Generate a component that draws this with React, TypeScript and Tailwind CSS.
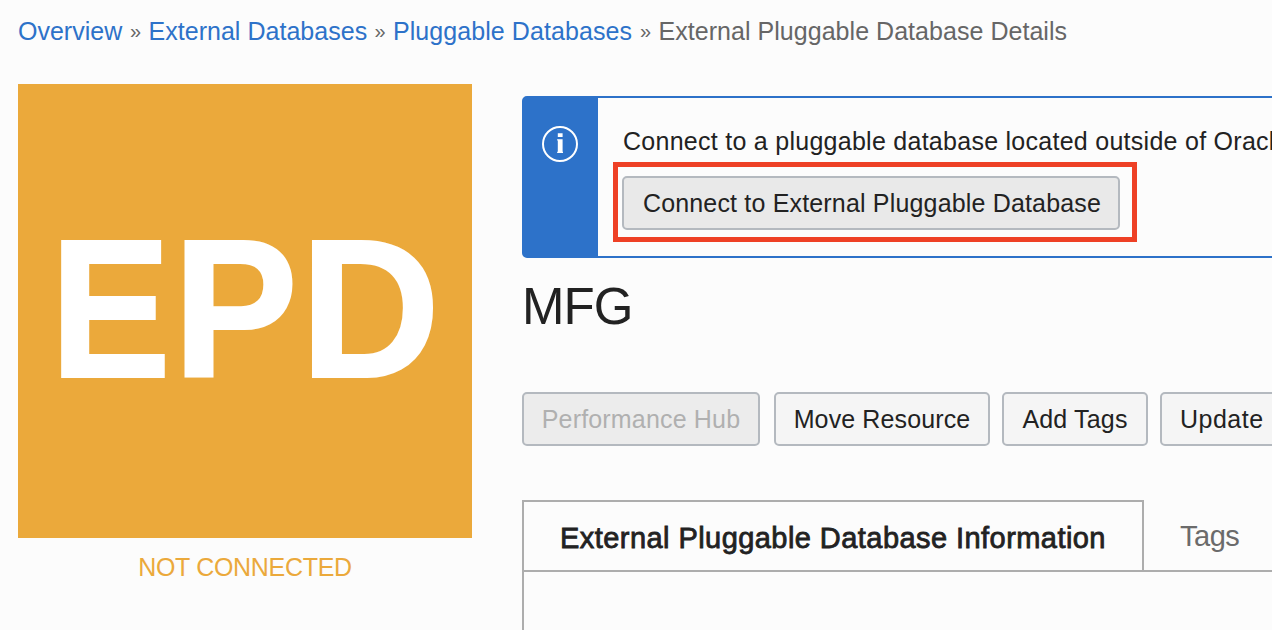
import { Fragment } from "react";
import type { ReactNode } from "react";

const crumbs = [
  { label: "Overview", width: "w-[112px]" },
  { label: "External Databases", width: "w-[226px] tracking-[0.03px]" },
  { label: "Pluggable Databases", width: "w-[247px] tracking-[0.07px]" },
];

function Button({ children, className = "" }: { children: ReactNode; className?: string }) {
  return (
    <button
      className={`h-[54px] shrink-0 whitespace-nowrap rounded-[5px] border-2 border-[#b4b9bf] pt-[2px] text-[25px] ${className}`}
    >
      {children}
    </button>
  );
}

function InfoIcon() {
  return (
    <svg width="36" height="36" viewBox="0 0 36 36" fill="none">
      <circle cx="18" cy="18" r="17" stroke="white" strokeWidth="2" />
      <path d="M15.8 7.2h4.8v3.8h-4.8zM15.8 13.2h4.8V27h-4.8z" fill="white" />
      <path d="M15.2 13.2h1v1.2h-1zM15.2 25.8h5.8V27h-5.8z" fill="white" />
    </svg>
  );
}

export default function App() {
  return (
    <div className="flex h-[630px] w-[1272px] flex-col overflow-hidden bg-[#fcfcfc] font-['Liberation_Sans',Arial,sans-serif] text-[#222]">
      <nav className="flex h-[84px] shrink-0 items-start whitespace-nowrap pl-[18px] pt-[13px] text-[25px] leading-[36px] text-[#666]">
        {crumbs.map((c) => (
          <Fragment key={c.label}>
            <a className={`shrink-0 text-[#2d72c9] ${c.width}`}>{c.label}</a>
            <span className="w-[18.5px] shrink-0 text-[20px]">»</span>
          </Fragment>
        ))}
        <span className="tracking-[0.04px]">External Pluggable Database Details</span>
      </nav>

      <div className="flex min-h-0 flex-1 pl-[18px]">
        <aside className="flex w-[454px] shrink-0 flex-col">
          <div className="flex h-[454px] shrink-0 justify-start bg-[#eba93b] pl-[32px] pt-[125px] text-[197px] font-bold leading-[200px] text-white [-webkit-text-stroke:2px_white]">
            <span className="w-[123px] origin-left scale-x-[0.92]">E</span>
            <span className="w-[127px] origin-left scale-x-[0.95]">P</span>
            <span className="origin-left scale-x-[0.985]">D</span>
          </div>
          <div className="pt-[11px] text-center text-[25px] leading-[36px] tracking-[-0.3px] text-[#eba93b]">NOT CONNECTED</div>
        </aside>

        <main className="flex w-[800px] shrink-0 flex-col pl-[50px] pt-[12px]">
          <section className="flex h-[162px] w-[800px] shrink-0 rounded-[5px] border-2 border-[#2d72c9]">
            <div className="flex w-[74px] shrink-0 bg-[#2d72c9] pl-[18px] pt-[28px]">
              <InfoIcon />
            </div>
            <div className="flex flex-col items-start whitespace-nowrap pl-[15px] pt-[25px]">
              <p className="h-[39px] pl-[10px] text-[25px] leading-[36px] tracking-[0.27px]">
                Connect to a pluggable database located outside of Oracle
              </p>
              <div className="h-[80px] w-[524px] shrink-0 border-[5px] border-[#ee4025] pl-[4px] pt-[9px]">
                <Button className="w-[498px] bg-[#e9e9e9] pl-[2px] tracking-[0.17px]">Connect to External Pluggable Database</Button>
              </div>
            </div>
          </section>

          <h1 className="h-[134px] shrink-0 pt-[19px] text-[51px] leading-[60px] tracking-[-1px]">MFG</h1>

          <div className="flex h-[108px] shrink-0">
            <Button className="mr-[14px] w-[238px] bg-[#ececec] tracking-[0.17px] text-[#b0b0b0]">Performance Hub</Button>
            <Button className="mr-[12px] w-[216px] bg-[#f5f5f5] tracking-[0.12px]">Move Resource</Button>
            <Button className="mr-[12px] w-[146px] bg-[#f5f5f5] tracking-[0.17px]">Add Tags</Button>
            <Button className="bg-[#f5f5f5] pl-[18px] pr-5 tracking-[0.5px]">Update</Button>
          </div>

          <div className="flex h-[72px] w-[800px] shrink-0 border-b-2 border-[#adadad]">
            <div className="w-[622px] shrink-0 whitespace-nowrap border-x-2 border-t-2 border-[#adadad] pl-[36px] pt-[16px] text-[29px] leading-[40px] tracking-[0.44px] [-webkit-text-stroke:0.8px_#222]">
              External Pluggable Database Information
            </div>
            <div className="pl-[36px] pt-[16px] text-[29px] leading-[40px] tracking-[-0.5px] text-[#6b6b6b]">Tags</div>
          </div>
          <div className="min-h-[60px] flex-1 border-l-2 border-[#adadad]" />
        </main>
      </div>
    </div>
  );
}
